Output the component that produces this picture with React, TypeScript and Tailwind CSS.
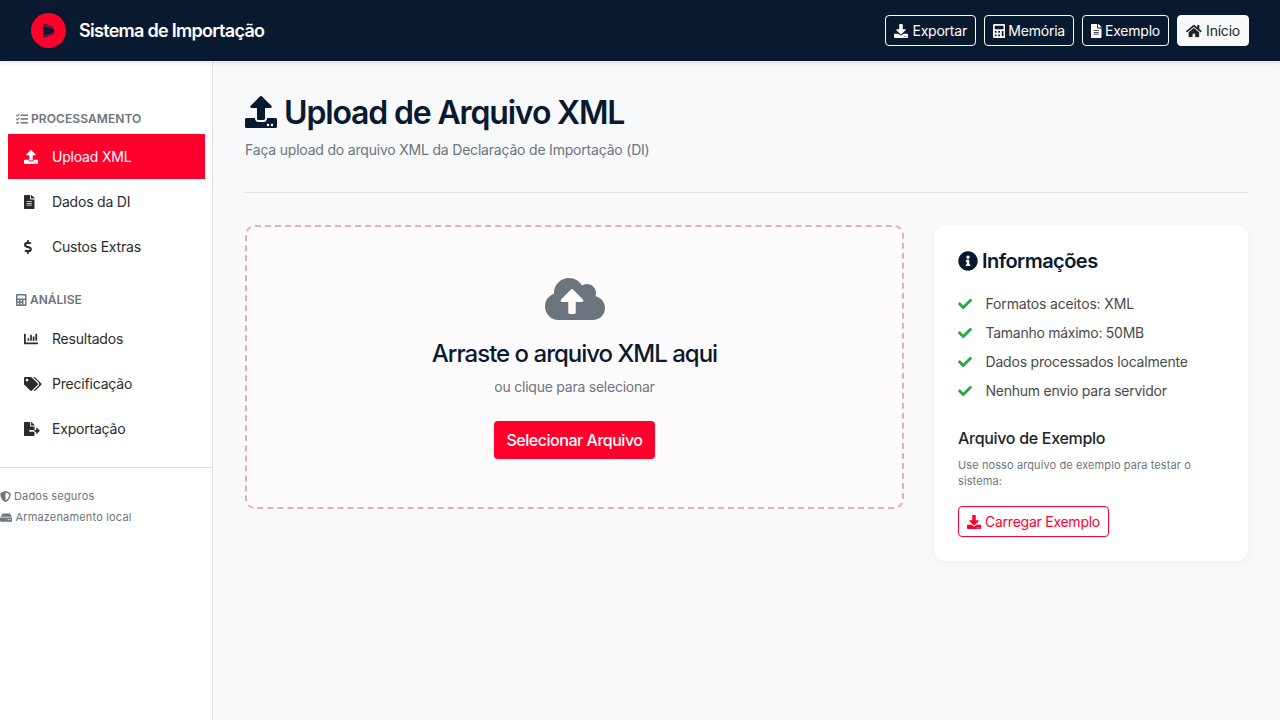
import React from "react";
import {
  FaUpload, FaDownload, FaCalculator, FaFileAlt, FaHome, FaTasks, FaDollarSign, FaChartBar,
  FaTags, FaFileExport, FaShieldAlt, FaHdd, FaCloudUploadAlt, FaInfoCircle, FaCheck,
} from "react-icons/fa";
import type { IconType } from "react-icons";

function Logo() {
  return (
    <svg viewBox="0 0 35 35" className="h-[35px] w-[35px]">
      <circle cx="17.5" cy="17.5" r="17.5" fill="#ff002d" />
      <g fill="#091a30">
        <path d="M12.2 10.2 L23.2 14.4 V15.4 L12.2 11.5 Z" />
        <path d="M12.2 12.4 L23.2 16.2 V19.2 L12.2 22.8 Z" />
        <path d="M12.2 23.6 L23.2 19.8 V20.8 L12.2 25 Z" />
      </g>
    </svg>
  );
}

type ButtonProps = { icon: IconType; iconWidth: string; label: string; className: string };

function HeaderButton({ icon: Icon, iconWidth, label, className }: ButtonProps) {
  return (
    <button className={`flex h-[31px] items-center justify-between rounded-[4px] border px-2 text-[14px] leading-[21px] tracking-[-0.22px] ${className}`}>
      <Icon className={`h-[14px] shrink-0 ${iconWidth}`} />
      <span className="whitespace-nowrap">{label}</span>
    </button>
  );
}

type NavProps = { icon: IconType; iconWidth: string; label: string; active?: boolean };

function NavItem({ icon: Icon, iconWidth, label, active = false }: NavProps) {
  return (
    <a className={`mr-[7px] ml-2 flex h-[45px] items-center pl-4 text-[14px] tracking-[-0.2px] ${active ? "bg-[#ff002d] text-white" : "text-[#2c2c2c]"}`}>
      <span className="flex w-7 shrink-0"><Icon className={`h-[14px] ${iconWidth}`} /></span>
      {label}
    </a>
  );
}

const facts = [
  { text: "Formatos aceitos: XML", tracking: "tracking-[-0.15px]" },
  { text: "Tamanho máximo: 50MB", tracking: "tracking-[-0.27px]" },
  { text: "Dados processados localmente", tracking: "tracking-[-0.2px]" },
  { text: "Nenhum envio para servidor", tracking: "tracking-[-0.25px]" },
];

export default function App() {
  return (
    <div className="flex h-[720px] w-[1280px] flex-col overflow-hidden bg-[#f8f9fb] font-['Inter',sans-serif] text-[#212529]">
      <header className="z-10 flex h-[61px] shrink-0 items-center justify-between bg-[#091a30] px-[31px] shadow-[0_2px_4px_rgba(0,0,0,0.1)]">
        <div className="flex items-center gap-[13px]">
          <Logo />
          <span className="text-[18px] font-semibold tracking-[-0.71px] text-white">Sistema de Importação</span>
        </div>
        <div className="flex gap-2 text-white">
          <HeaderButton icon={FaDownload} iconWidth="w-[14px]" label="Exportar" className="w-[91px] border-white" />
          <HeaderButton icon={FaCalculator} iconWidth="w-[12.25px]" label="Memória" className="w-[90px] border-white" />
          <HeaderButton icon={FaFileAlt} iconWidth="w-[10.5px]" label="Exemplo" className="w-[87px] border-white" />
          <HeaderButton icon={FaHome} iconWidth="w-[15.75px]" label="Início" className="w-[72px] border-[#f8f9fa] bg-[#f8f9fa] text-[#212529]" />
        </div>
      </header>
      <div className="flex flex-1">
        <aside className="w-[213px] shrink-0 border-r border-[#dee2e6] bg-white pt-[49px]">
          <h6 className="flex h-6 items-start gap-[3px] pl-4 text-[12px] leading-[18px] font-semibold tracking-[0.08px] text-[#6c757d]">
            <FaTasks className="mt-[3px]" />PROCESSAMENTO
          </h6>
          <NavItem icon={FaUpload} iconWidth="w-[14px]" label="Upload XML" active />
          <NavItem icon={FaFileAlt} iconWidth="w-[10.5px]" label="Dados da DI" />
          <NavItem icon={FaDollarSign} iconWidth="w-[7.875px]" label="Custos Extras" />
          <h6 className="mt-[22px] flex h-[25px] items-start gap-[3.5px] pl-4 text-[12px] leading-[18px] font-semibold text-[#6c757d]">
            <FaCalculator className="mt-[3px] h-3 w-[10.5px]" />ANÁLISE
          </h6>
          <NavItem icon={FaChartBar} iconWidth="w-[14px]" label="Resultados" />
          <NavItem icon={FaTags} iconWidth="w-[17.5px]" label="Precificação" />
          <NavItem icon={FaFileExport} iconWidth="w-[15.75px]" label="Exportação" />
          <div className="mt-4 flex flex-col border-t border-[#dee2e6] pt-[18px] text-[11px] leading-[21px] tracking-[0.17px] text-[#6c757d]">
            <span className="flex items-center gap-[3px]"><FaShieldAlt className="h-[11px] w-[11px]" />Dados seguros</span>
            <span className="flex items-center gap-[3px]"><FaHdd className="h-[11px] w-[12.4px]" />Armazenamento local</span>
          </div>
        </aside>
        <main className="flex-1 px-8 pt-8">
          <div className="h-[100px] border-b border-[#dee2e6]">
            <h1 className="flex h-[38px] items-center gap-[7px] text-[32px] font-semibold tracking-[-1.16px] text-[#091a30]">
              <FaUpload /><span className="pt-[2px]">Upload de Arquivo XML</span>
            </h1>
            <p className="mt-2 text-[14px] leading-[21px] tracking-[-0.2px] text-[#6c757d]">Faça upload do arquivo XML da Declaração de Importação (DI)</p>
          </div>
          <div className="mt-8 flex items-start gap-[30px]">
            <section className="flex h-[284px] w-[659px] flex-col items-center rounded-[10px] border-2 border-dashed border-[#e6adbc] bg-[#fefbfc] pt-[48px]">
              <FaCloudUploadAlt className="h-12 w-[60px] text-[#6c757d]" />
              <h4 className="mt-[16px] text-[24px] leading-[29px] font-medium tracking-[-1px] text-[#091a30]">Arraste o arquivo XML aqui</h4>
              <p className="mt-[8px] text-[14px] leading-[21px] tracking-[-0.24px] text-[#6c757d]">ou clique para selecionar</p>
              <button className="mt-6 h-[38px] w-[161px] rounded-[4px] bg-[#ff002d] text-[16px] font-medium tracking-[-0.47px] whitespace-nowrap text-white">Selecionar Arquivo</button>
            </section>
            <section className="h-[336px] w-[314px] rounded-[12px] bg-white px-6 pt-6 shadow-[0_2px_8px_rgba(0,0,0,0.04)]">
              <h5 className="flex h-6 items-center gap-1 text-[20px] font-semibold tracking-[-0.54px] text-[#091a30]"><FaInfoCircle />Informações</h5>
              <ul className="mt-4">
                {facts.map((f) => (
                  <li key={f.text} className={`flex h-[29px] items-center text-[14px] text-[#4a4a4a] ${f.tracking}`}>
                    <FaCheck className="mr-[13.5px] text-[#28a745]" />{f.text}
                  </li>
                ))}
              </ul>
              <h6 className="mt-6 text-[16px] leading-[19px] font-medium tracking-[-0.3px]">Arquivo de Exemplo</h6>
              <p className="mt-[9px] text-[11px] leading-4 tracking-[0.1px] text-[#6c757d]">Use nosso arquivo de exemplo para testar o sistema:</p>
              <button className="mt-[17px] flex h-[31px] w-[151px] items-center justify-between rounded-[4px] border border-[#ff002d] px-2 text-[14px] tracking-[-0.25px] whitespace-nowrap text-[#ff002d]">
                <FaDownload /><span>Carregar Exemplo</span>
              </button>
            </section>
          </div>
        </main>
      </div>
    </div>
  );
}
